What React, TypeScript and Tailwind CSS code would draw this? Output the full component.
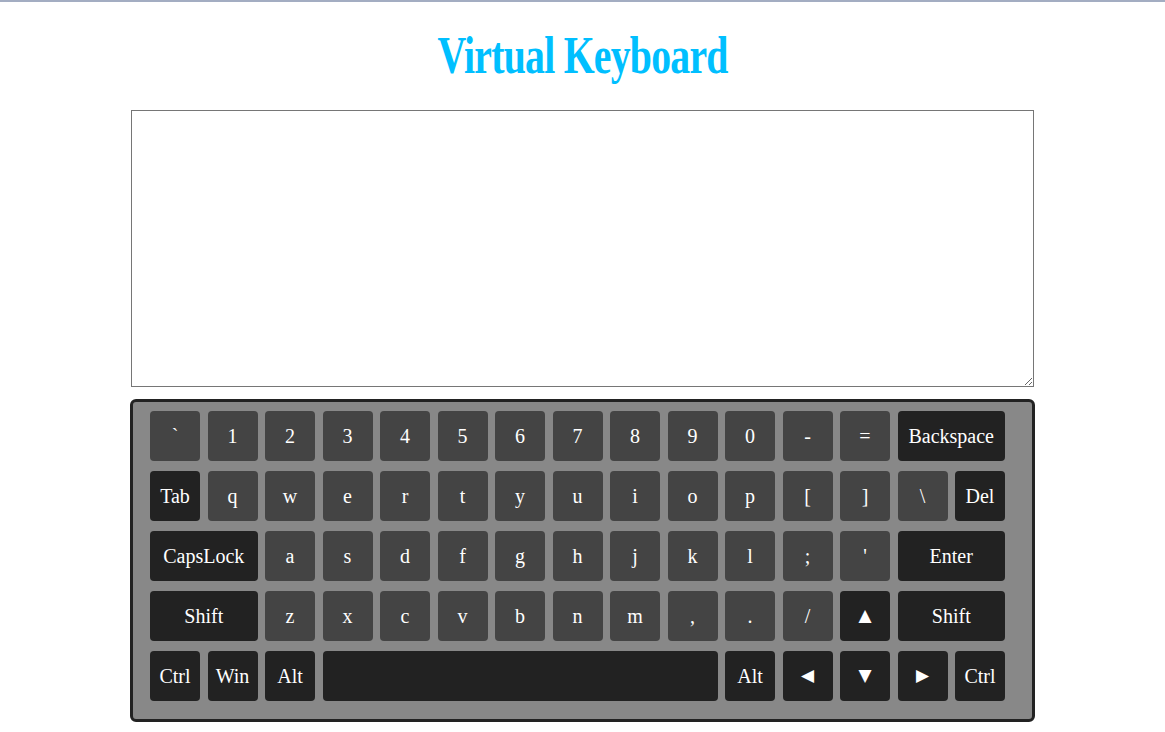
import React from "react";

type Key = { label: string; span?: number; dark?: boolean };

const rows: Key[][] = [
  [
    ..."`1234567890-=".split("").map((c) => ({ label: c })),
    { label: "Backspace", span: 2, dark: true },
  ],
  [
    { label: "Tab", dark: true },
    ..."qwertyuiop[]\\".split("").map((c) => ({ label: c })),
    { label: "Del", dark: true },
  ],
  [
    { label: "CapsLock", span: 2, dark: true },
    ..."asdfghjkl;'".split("").map((c) => ({ label: c })),
    { label: "Enter", span: 2, dark: true },
  ],
  [
    { label: "Shift", span: 2, dark: true },
    ..."zxcvbnm,./".split("").map((c) => ({ label: c })),
    { label: "▲", dark: true },
    { label: "Shift", span: 2, dark: true },
  ],
  [
    { label: "Ctrl", dark: true },
    { label: "Win", dark: true },
    { label: "Alt", dark: true },
    { label: "", span: 7, dark: true },
    { label: "Alt", dark: true },
    { label: "◀", dark: true },
    { label: "▼", dark: true },
    { label: "▶", dark: true },
    { label: "Ctrl", dark: true },
  ],
];

const spanClass: Record<number, string> = {
  1: "col-span-1",
  2: "col-span-2",
  7: "col-span-7",
};

const isArrow = (s: string) => s.length === 1 && "▲◀▼▶".includes(s);

export default function App() {
  return (
    <div className="min-h-[732px] bg-white">
      <div className="h-[2px] bg-[#a3adc2]" />
      <div className="flex flex-col items-center">
        <h1 className="mt-[26px] h-[56px] flex items-center justify-center text-[#00bfff] font-['Liberation_Serif',serif] font-bold text-[52px] leading-none scale-x-[0.765] tracking-[-1px] whitespace-nowrap">
          Virtual Keyboard
        </h1>
        <textarea className="mt-[26px] w-[903px] h-[277px] border border-[#767676] bg-white outline-none" />
        <div className="mt-[12px] w-[905px] h-[323px] border-[3px] border-[#222] rounded-[6px] bg-[#888] pt-[9px] pl-[17px]">
          <div className="grid grid-cols-[repeat(15,50px)] auto-rows-[50px] gap-x-[7.5px] gap-y-[10px]">
            {rows.flatMap((row, ri) =>
              row.map((k, ki) => (
                <div
                  key={`${ri}-${ki}`}
                  className={`${spanClass[k.span ?? 1]} ${
                    k.dark ? "bg-[#222]" : "bg-[#444]"
                  } rounded-[4px] flex items-center justify-center text-white ${
                    isArrow(k.label)
                      ? "font-['DejaVu_Sans',sans-serif] text-[17px]"
                      : "font-['Liberation_Serif',serif] text-[20px]"
                  }`}
                >
                  {k.label}
                </div>
              ))
            )}
          </div>
        </div>
      </div>
    </div>
  );
}
